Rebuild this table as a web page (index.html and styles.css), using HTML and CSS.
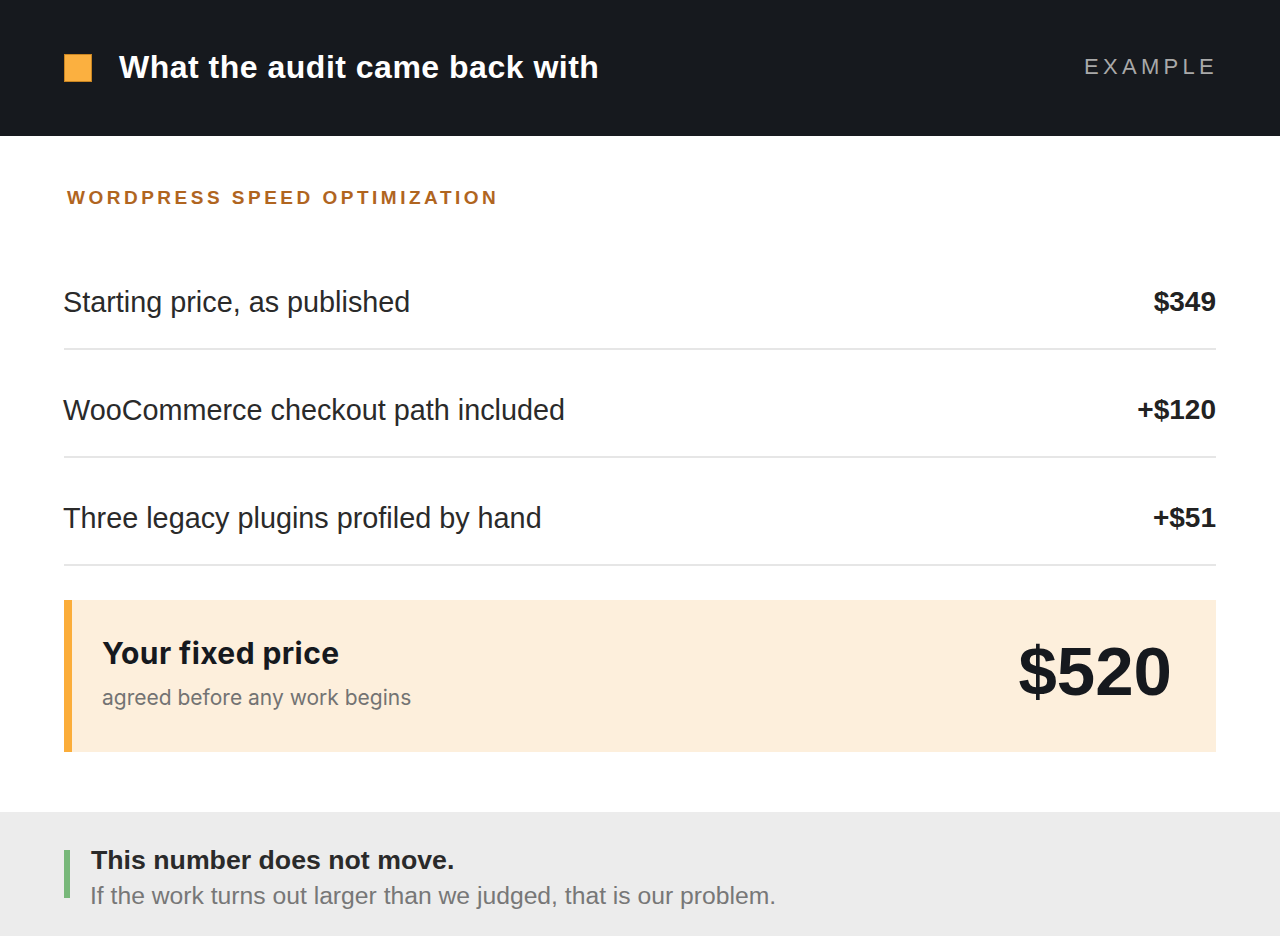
FILE: index.html
```html
<!DOCTYPE html>
<html>
<head>
<meta charset="utf-8">
<link rel="stylesheet" href="styles.css">
</head>
<body>
<header class="top">
  <div class="brand">
    <span class="mark"></span>
    <h1 class="title">What the audit came back with</h1>
  </div>
  <span class="tag">EXAMPLE</span>
</header>
<main class="content">
  <div class="eyebrow">WORDPRESS SPEED OPTIMIZATION</div>
  <ul class="rows">
    <li class="row"><span class="label">Starting price, as published</span><span class="amount">$349</span></li>
    <li class="row"><span class="label">WooCommerce checkout path included</span><span class="amount">+$120</span></li>
    <li class="row"><span class="label">Three legacy plugins profiled by hand</span><span class="amount">+$51</span></li>
  </ul>
  <section class="total">
    <div class="total-text">
      <div class="total-title">Your fixed price</div>
      <div class="total-sub">agreed before any work begins</div>
    </div>
    <div class="total-amount">$520</div>
  </section>
</main>
<footer class="note">
  <span class="note-bar"></span>
  <div class="note-text">
    <div class="note-title">This number does not move.</div>
    <div class="note-sub">If the work turns out larger than we judged, that is our problem.</div>
  </div>
</footer>
</body>
</html>
```

FILE: styles.css
```css
* { box-sizing: border-box; }
html, body { margin: 0; padding: 0; }
body {
  width: 1280px;
  height: 936px;
  background: #ffffff;
  font-family: "Liberation Sans", Arial, sans-serif;
  color: #222;
  overflow: hidden;
}
.top {
  height: 136px;
  background: #16191e;
  display: flex;
  align-items: center;
  justify-content: space-between;
  padding: 0 64px;
}
.brand { display: flex; align-items: center; gap: 27px; }
.mark {
  width: 28px; height: 28px;
  background: #fbb040;
  border: 1px solid #c98522;
  display: block;
}
.title {
  margin: 0 0 2px;
  color: #fff;
  font-size: 32px;
  line-height: 36px;
  font-weight: 700;
  letter-spacing: 0.5px;
}
.tag {
  color: #a9a9a9;
  font-size: 22px;
  line-height: 26px;
  letter-spacing: 4.3px;
  margin-right: -2px;
  margin-bottom: 2px;
}
.content { padding: 0 64px; }
.eyebrow {
  margin-top: 52px;
  padding-left: 3px;
  color: #b0651f;
  font-size: 19px;
  font-weight: 700;
  letter-spacing: 3.5px;
  line-height: 20px;
}
.rows { list-style: none; margin: 34px 0 0; padding: 0; }
.row {
  display: flex;
  justify-content: space-between;
  align-items: center;
  height: 108px;
  padding-top: 14px;
  border-bottom: 2px solid #e6e6e6;
}
.label { font-size: 28.8px; line-height: 34px; color: #2a2a2a; margin-left: -1px; }
.amount { font-size: 28px; line-height: 34px; font-weight: 700; color: #222; }
.total {
  margin-top: 34px;
  height: 152px;
  background: #fdefdc;
  border-left: 8px solid #fbad3a;
  display: flex;
  align-items: center;
  justify-content: space-between;
  padding: 0 44px 0 30px;
}
.total-text { margin-bottom: 6px; }
.total-title {
  font-family: Inter, sans-serif;
  font-weight: 700;
  font-size: 30px;
  line-height: 36px;
  letter-spacing: 0.4px;
  color: #16191e;
}
.total-sub {
  font-family: Inter, sans-serif;
  font-size: 21px;
  line-height: 26px;
  color: #737373;
  margin-top: 14px;
}
.total-amount {
  font-size: 69px;
  line-height: 80px;
  font-weight: 700;
  color: #16191e;
  margin-bottom: 8px;
}
.note {
  margin-top: 60px;
  height: 124px;
  background: #ececec;
  padding: 35px 64px 0;
  display: flex;
  align-items: flex-start;
}
.note-bar {
  display: block;
  width: 6px;
  height: 48px;
  margin-top: 3px;
  background: #78b87a;
  flex: none;
}
.note-text { padding-left: 21px; }
.note-title {
  font-weight: 700;
  font-size: 26.7px;
  line-height: 26px;
  color: #2a2a2a;
}
.note-sub {
  font-size: 24.7px;
  line-height: 28px;
  color: #777;
  margin-top: 9px;
  margin-left: -1px;
}
```
